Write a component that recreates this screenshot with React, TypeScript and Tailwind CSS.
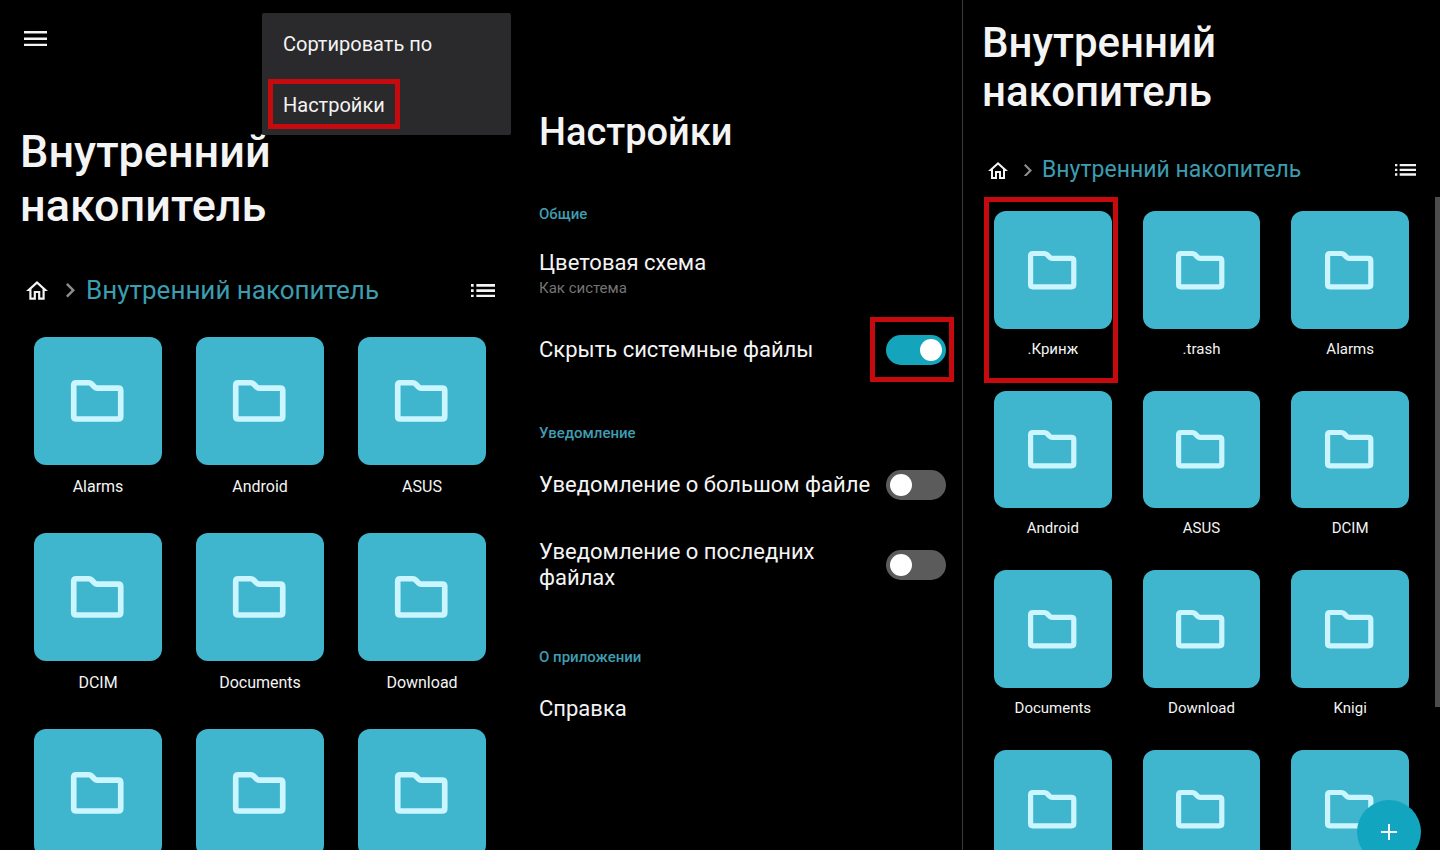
import { useState } from "react"
import clsx from "clsx"

const storageFolders = ["Alarms", "Android", "ASUS", "DCIM", "Documents", "Download", "", "", ""]

const allFolders = [
  ".Кринж",
  ".trash",
  "Alarms",
  "Android",
  "ASUS",
  "DCIM",
  "Documents",
  "Download",
  "Knigi",
  "",
  "",
  "",
]

function MenuIcon({ className }: { className?: string }) {
  return (
    <svg viewBox="3 6 18 12" fill="currentColor" className={className} aria-hidden="true">
      <path d="M3 18h18v-2H3v2zm0-5h18v-2H3v2zm0-7v2h18V6H3z" />
    </svg>
  )
}

function HomeIcon({ className }: { className?: string }) {
  return (
    <svg viewBox="2 3 20 17" fill="currentColor" className={className} aria-hidden="true">
      <path d="M12 5.69l5 4.5V18h-2v-6H9v6H7v-7.81l5-4.5M12 3L2 12h3v8h6v-6h2v6h6v-8h3L12 3z" />
    </svg>
  )
}

function ChevronIcon({ className }: { className?: string }) {
  return (
    <svg viewBox="8.59 6 7.41 12" fill="currentColor" className={className} aria-hidden="true">
      <path d="M10 6L8.59 7.41 13.17 12l-4.58 4.59L10 18l6-6z" />
    </svg>
  )
}

function ListIcon({ className }: { className?: string }) {
  return (
    <svg viewBox="3 7 18 10" fill="currentColor" className={className} aria-hidden="true">
      <path d="M3 13h2v-2H3v2zm0 4h2v-2H3v2zm0-8h2V7H3v2zm4 4h14v-2H7v2zm0 4h14v-2H7v2zM7 7v2h14V7H7z" />
    </svg>
  )
}

function FolderIcon() {
  return (
    <svg viewBox="1 0 52 41.4" className="w-[41%] overflow-visible" aria-hidden="true">
      <path
        d="M5.2 2.7H17.6Q19.2 2.7 20.2 3.7L23.4 6.9Q24.5 8 26 8H46.8Q49.3 8 49.3 10.5V36.2Q49.3 38.7 46.8 38.7H5.2Q2.7 38.7 2.7 36.2V5.2Q2.7 2.7 5.2 2.7Z"
        fill="none"
        stroke="#cbf6ff"
        strokeWidth="5.6"
        strokeLinejoin="round"
      />
    </svg>
  )
}

// Red frame drawn over the thing the reader should tap
function Highlight({ className }: { className: string }) {
  return <span className={clsx("pointer-events-none absolute border-5 border-[#c60a0e]", className)} />
}

function Breadcrumbs({ compact = false }: { compact?: boolean }) {
  return (
    <nav className="flex items-center">
      <a href="#home" aria-label="Домой">
        <HomeIcon className={compact ? "w-5" : "w-[22px]"} />
      </a>
      <ChevronIcon className={clsx("text-[#8c8c8c]", compact ? "ml-4 w-2" : "ml-[18px] w-[9px]")} />
      <a
        href="#storage"
        className={clsx("leading-8 text-[#3c9db0]", compact ? "ml-[10px] text-[23px]" : "ml-[11px] text-[26px]")}
      >
        Внутренний накопитель
      </a>
      <button type="button" aria-label="Список" className="ml-auto">
        <ListIcon className={compact ? "w-[21px]" : "w-6"} />
      </button>
    </nav>
  )
}

function FolderTile({ name, compact = false, marked = false }: { name: string; compact?: boolean; marked?: boolean }) {
  return (
    <button type="button" aria-label={name || "Папка"} className="relative flex flex-col items-stretch">
      <span className="flex aspect-square items-center justify-center rounded-xl bg-[#40b6ce]">
        <FolderIcon />
      </span>
      <span className={clsx("h-5 text-center leading-5", compact ? "mt-[10px] text-[15px]" : "mt-3 text-[16px]")}>
        {name}
      </span>
      {marked && <Highlight className="-top-[14px] -right-[6px] -bottom-6 -left-[10px]" />}
    </button>
  )
}

function StoragePane() {
  return (
    <section className="relative px-5 pt-[30px]">
      <button type="button" aria-label="Меню" className="ml-1 block py-px">
        <MenuIcon className="w-[23px]" />
      </button>
      <div
        role="menu"
        className="absolute top-[13px] right-[9px] flex w-[249px] flex-col rounded-xs bg-[#2a292b] text-[20px] leading-7"
      >
        <button type="button" role="menuitem" className="px-[21px] pt-[17px] pb-4 text-left">
          Сортировать по
        </button>
        <button type="button" role="menuitem" className="px-[21px] pt-[17px] pb-4 text-left">
          <span className="relative">
            Настройки
            <Highlight className="-inset-x-[15px] -top-[14px] -bottom-3" />
          </span>
        </button>
      </div>

      <h1 className="mt-[78px] max-w-72 text-[45px] leading-[54px] font-medium">Внутренний накопитель</h1>
      <div className="mt-[41px] pr-[5px] pl-1.5">
        <Breadcrumbs />
      </div>
      <div className="mt-[31px] grid grid-cols-3 gap-x-[34px] gap-y-9 px-[14px]">
        {storageFolders.map((name, i) => (
          <FolderTile key={i} name={name} />
        ))}
      </div>
    </section>
  )
}

type SwitchRowProps = {
  id: string
  label: string
  defaultOn?: boolean
  marked?: boolean
}

function SwitchRow({ id, label, defaultOn = false, marked = false }: SwitchRowProps) {
  const [on, setOn] = useState(defaultOn)

  return (
    <div className="flex items-center justify-between gap-3">
      <label htmlFor={id} className="text-[22px] leading-[26px]">
        {label}
      </label>
      <span className="relative flex shrink-0">
        <input
          id={id}
          type="checkbox"
          role="switch"
          checked={on}
          onChange={(e) => setOn(e.target.checked)}
          className="flex h-[30px] w-[60px] appearance-none items-center rounded-full bg-[#5b5b5b] px-1 before:size-[22px] before:rounded-full before:bg-white checked:justify-end checked:bg-[#14a5bd]"
        />
        {marked && <Highlight className="-top-[18px] -right-2 -bottom-[17px] -left-4" />}
      </span>
    </div>
  )
}

function SectionTitle({ children }: { children: string }) {
  return <h2 className="text-[15px] leading-5 font-medium text-[#3f9db1]">{children}</h2>
}

function SettingsPane() {
  return (
    <section className="pt-[108px] pr-4 pl-[19px]">
      <h1 className="text-[38px] leading-[48px] font-medium">Настройки</h1>

      <div className="mt-12">
        <SectionTitle>Общие</SectionTitle>
        <button type="button" className="mt-[26px] block text-left">
          <span className="block text-[22px] leading-[26px]">Цветовая схема</span>
          <span className="mt-0.5 block text-[15px] leading-5 text-[#747474]">Как система</span>
        </button>
        <div className="mt-[37px]">
          <SwitchRow id="hide-system" label="Скрыть системные файлы" defaultOn marked />
        </div>
      </div>

      <div className="mt-[58px]">
        <SectionTitle>Уведомление</SectionTitle>
        <div className="mt-[27px] flex flex-col gap-[39px]">
          <SwitchRow id="notify-large" label="Уведомление о большом файле" />
          <SwitchRow id="notify-recent" label="Уведомление о последних файлах" />
        </div>
      </div>

      <div className="mt-[56px]">
        <SectionTitle>О приложении</SectionTitle>
        <a href="#help" className="mt-[29px] block text-[22px] leading-[26px]">
          Справка
        </a>
      </div>
    </section>
  )
}

function AllFilesPane() {
  return (
    <section className="relative overflow-hidden border-l border-[#3a3a3a] px-[19px] pt-[18px]">
      <h1 className="max-w-64 text-[42px] leading-[49px] font-medium">Внутренний накопитель</h1>
      <div className="mt-[38px] pr-[5px] pl-[6px]">
        <Breadcrumbs compact />
      </div>
      <div className="mt-[25px] grid grid-cols-3 gap-x-[31px] gap-y-8 px-3">
        {allFolders.map((name, i) => (
          <FolderTile key={i} name={name} compact marked={i === 0} />
        ))}
      </div>

      <span className="absolute top-[197px] right-0 h-[60%] w-[5px] bg-[#4c4c4c]" />
      <button
        type="button"
        aria-label="Добавить"
        className="absolute right-[19px] -bottom-[14px] flex size-16 items-center justify-center rounded-full bg-[#12a5c0]"
      >
        <svg viewBox="0 0 16 16" className="w-4" stroke="currentColor" strokeWidth="2" aria-hidden="true">
          <path d="M8 0V16M0 8H16" />
        </svg>
      </button>
    </section>
  )
}

export default function App() {
  return (
    <main className="grid h-screen grid-cols-[520fr_442fr_478fr] grid-rows-1 overflow-hidden bg-black font-[Roboto,sans-serif] text-[#f4f4f4]">
      <StoragePane />
      <SettingsPane />
      <AllFilesPane />
    </main>
  )
}
